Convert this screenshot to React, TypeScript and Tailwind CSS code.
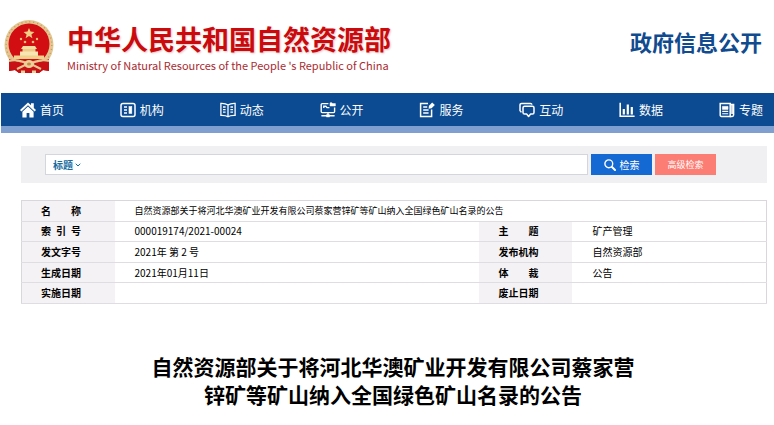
import React from "react";
import { ChevronDown } from "lucide-react";

interface NavItemProps {
  title: string;
  icon: React.ReactNode;
}

const HomeIcon = () => (
  <svg viewBox="0 0 16 16" className="h-4 w-4" fill="currentColor">
    <path d="M8 0.4 0 8l1.4 1.4L8 3.2l6.6 6.2L16 8 13.8 5.9V1.2h-2.800v2z" />
    <path d="M8 4.4 2.4 9.7V15.6h4.200V11h2.800v4.6h4.200V9.7z" />
  </svg>
);

const OrgIcon = () => (
  <svg viewBox="0 0 16 16" className="h-4 w-4" fill="none" stroke="currentColor">
    <rect x="1" y="1.4" width="14" height="13.2" rx="2" strokeWidth="1.5" />
    <path d="M4 5h3M4 8h3M4 11h3" strokeWidth="1.5" />
    <rect x="9" y="4.6" width="2.8" height="6.8" fill="currentColor" strokeWidth="0.6" />
  </svg>
);

const BookIcon = () => (
  <svg viewBox="0 0 16 16" className="h-4 w-4" fill="none" stroke="currentColor" strokeWidth="1.3">
    <path d="M8 3C6 1.6 3.5 1.3 0.9 1.4V13.4C3.5 13.3 6 13.4 8 14.8 10 13.4 12.5 13.3 15.1 13.4V1.4C12.5 1.3 10 1.6 8 3zM8 3V14.8" />
    <path d="M3 5h2.6M3 7.6h2.6M3 10.2h2.6M10.4 5H13M10.4 7.6H13M10.4 10.2H13" />
  </svg>
);

const OpenIcon = () => (
  <svg viewBox="0 0 16 16" className="h-4 w-4" fill="none" stroke="currentColor" strokeWidth="1.4">
    <path d="M8.4 1.6H2.2a1 1 0 0 0-1 1v7a1 1 0 0 0 1 1h11.4a1 1 0 0 0 1-1V5.4" />
    <path d="M10 3V0.8h2l0.6 0.8H15.4V4H10z" fill="currentColor" strokeWidth="0.5" />
    <path d="M3.8 6V4.2h2L7 5.6h2.4M8 10.6v3M1.4 13.8h13.2" />
    <path d="M6.4 12.6h3.2v2.4H6.4z" fill="currentColor" strokeWidth="0.4" />
  </svg>
);

const ServiceIcon = () => (
  <svg viewBox="0 0 16 16" className="h-4 w-4" fill="none" stroke="currentColor" strokeWidth="1.5">
    <path d="M9 1.4H1.6v13.2h11V7.6" />
    <path d="M4.2 5h4M4.2 8h5.4M4.2 11h5.4" strokeWidth="1.3" />
    <path d="M9.6 6.8 10 3.8 13.2 0.4l2.6 2.6-3.2 3.2z" fill="currentColor" stroke="none" />
  </svg>
);

const ChatIcon = () => (
  <svg viewBox="0 0 16 16" className="h-4 w-4" fill="none" stroke="currentColor" strokeWidth="1.5" strokeLinejoin="round">
    <path d="M2.4 10.4 1 8.6V3a1.6 1.6 0 0 1 1.6-1.6h8.800a1.6 1.6 0 0 1 1.6 1.2" />
    <path d="M5.6 4.2h7.800a1.6 1.6 0 0 1 1.6 1.6v4.6a1.6 1.6 0 0 1-1.6 1.6h-1.800l-2 2.4-2-2.4h-2A1.6 1.6 0 0 1 4 10.4V5.800a1.6 1.6 0 0 1 1.6-1.6z" />
  </svg>
);

const ChartIcon = () => (
  <svg viewBox="0 0 16 16" className="h-4 w-4" fill="none" stroke="currentColor">
    <path d="M1.2 0.8V14.2H15.6" strokeWidth="1.6" />
    <path d="M4.8 7v5.6M8.8 2.4v10.2M12.8 5v7.6" strokeWidth="2.2" />
  </svg>
);

const NewsIcon = () => (
  <svg viewBox="0 0 16 16" className="h-4 w-4" fill="none" stroke="currentColor" strokeWidth="1.5">
    <path d="M1.2 1.4h10v13H2.4a1.2 1.2 0 0 1-1.2-1.2z" />
    <path d="M11.2 2.4h3.4v10.6a1.4 1.4 0 0 1-1.4 1.4h-2.4M13 3v9" />
    <path d="M3.4 4.4H9v3H3.4z" fill="currentColor" strokeWidth="0.6" />
    <path d="M3.2 9.4h6M3.2 11.8h6" strokeWidth="1.1" />
  </svg>
);

const SearchIcon = () => (
  <svg viewBox="0 0 12 12" className="h-3 w-3" fill="none" stroke="currentColor">
    <circle cx="4.8" cy="4.8" r="3.9" strokeWidth="1.4" />
    <path d="m8 8 3 3" strokeWidth="2" strokeLinecap="round" />
  </svg>
);

const Emblem = () => (
  <svg viewBox="0 0 52 56" className="h-14 w-[52px] shrink-0" aria-hidden="true">
    <path d="M7 38 6 52l6-1 4 3h20l4-3 6 1-1-14z" fill="#b80f12" />
    <ellipse cx="26" cy="26" rx="24.5" ry="25" fill="#e3c691" />
    <ellipse cx="26" cy="26" rx="22.8" ry="23.2" fill="none" stroke="#c49a5a" strokeWidth="1.4" strokeDasharray="1 3" />
    <ellipse cx="26" cy="25" rx="20.5" ry="20.5" fill="#d20e12" />
    <path d="m26 9 1.5 3.6 3.9.3-3 2.5 1 3.8-3.4-2.1-3.4 2.1 1-3.8-3-2.5 3.9-.3z" fill="#f2cf83" />
    <g fill="#eebf70">
      <circle cx="18" cy="20" r="1.2" />
      <circle cx="22" cy="23" r="1.3" />
      <circle cx="30" cy="23" r="1.3" />
      <circle cx="34" cy="20" r="1.2" />
    </g>
    <path d="M20 27h12l2 3H18z" fill="#f5dda0" />
    <path d="M19.5 30h13v3h-13z" fill="#efc987" />
    <path d="M17 32.500h18V37H17z" fill="#f8e5b4" />
    <path d="M11 36.500h30V40H11z" fill="#f0d28f" />
    <path d="M6 40c6 2 12 4 20 4s14-2 20-4v12l-6-1-4 3H16l-4-3-6 1z" fill="#c81114" />
    <path d="M6 42c7-2 12 0 20 3 8-3 13-5 20-3M14 50l8-4h8l8 4" fill="none" stroke="#e6c78f" strokeWidth="2.2" />
    <ellipse cx="26" cy="45" rx="5" ry="4" fill="#ecd09a" />
    <ellipse cx="26" cy="45" rx="2" ry="1.5" fill="#c88a45" />
    <path d="M18 54v-2.500h4V54M29 54v-2.500h4V54" fill="#ecd09a" />
  </svg>
);

const navItems: NavItemProps[] = [
  { title: "首页", icon: <HomeIcon /> },
  { title: "机构", icon: <OrgIcon /> },
  { title: "动态", icon: <BookIcon /> },
  { title: "公开", icon: <OpenIcon /> },
  { title: "服务", icon: <ServiceIcon /> },
  { title: "互动", icon: <ChatIcon /> },
  { title: "数据", icon: <ChartIcon /> },
  { title: "专题", icon: <NewsIcon /> },
];

const rows = [
  { label: ["索", "引", "号"], value: "000019174/2021-00024", label2: ["主", "题"], value2: "矿产管理" },
  { label: ["发文字号"], value: "2021年 第 2 号", label2: ["发布机构"], value2: "自然资源部" },
  { label: ["生成日期"], value: "2021年01月11日", label2: ["体", "裁"], value2: "公告" },
  { label: ["实施日期"], value: "", label2: ["废止日期"], value2: "" },
];

const NavItem: React.FC<NavItemProps> = ({ title, icon }) => {
  return (
    <a href="#" className="flex items-center gap-1 text-[12px] leading-4 text-white">
      {icon}
      {title}
    </a>
  );
};

const LabelCell: React.FC<{ parts: string[] }> = ({ parts }) => {
  return (
    <th scope="row" className="bg-[#f4f2f4] p-0 pl-[19px] text-left font-bold">
      <span className="flex w-10 justify-between whitespace-nowrap">
        {parts.map((part) => (
          <span key={part}>{part}</span>
        ))}
      </span>
    </th>
  );
};

const App: React.FC = () => {
  return (
    <div className="w-full bg-white pb-4 font-['Noto_Sans_CJK_SC',sans-serif] text-black">
      <header className="flex h-[93px] items-center justify-between pr-3 pl-[3px]">
        <div className="flex items-center gap-3">
          <Emblem />
          <div className="pt-1">
            <p className="text-[27px] leading-8 font-bold text-[#cb0a0e] [text-shadow:1px_1px_2px_#e8c4c4]">
              中华人民共和国自然资源部
            </p>
            <p className="text-[11px] leading-5 whitespace-nowrap text-[#a92a30]">
              Ministry of Natural Resources of the People 's Republic of China
            </p>
          </div>
        </div>
        <p className="pb-3 text-[22px] leading-7 font-bold text-[#114b8f]">政府信息公开</p>
      </header>

      <nav className="ml-px flex h-10 items-center justify-between border-b-[7px] border-[#7e9fd0] bg-[#0c4b91] pr-[11px] pl-[19px]">
        {navItems.map((item) => (
          <NavItem key={item.title} {...item} />
        ))}
      </nav>

      <main className="pr-[7px] pl-[21px]">
        <form
          className="mt-[13px] flex h-[37px] items-center gap-[3px] bg-[#f0eff1] pr-[51px] pl-6 text-[10px]"
          onSubmit={(e) => e.preventDefault()}
        >
          <div className="relative flex h-[21px] flex-1 items-center border border-[#d5d5de] bg-white pl-[7px]">
            <select
              aria-label="检索字段"
              className="h-full w-8 appearance-none bg-transparent font-bold text-[#166c9e] outline-none"
            >
              <option>标题</option>
            </select>
            <ChevronDown className="pointer-events-none absolute left-7 h-2 w-2 text-[#166c9e]" strokeWidth={3} />
            <input aria-label="检索内容" type="text" className="h-full min-w-0 flex-1 px-2 outline-none" />
          </div>
          <button type="submit" className="flex h-[21px] w-[61px] items-center justify-center gap-1 bg-[#1469d3] text-white">
            <SearchIcon />
            检索
          </button>
          <button type="button" className="h-[21px] w-[61px] bg-[#fb7d74] text-[9px] text-white">
            高级检索
          </button>
        </form>

        <table className="mt-[17px] h-[104px] w-full table-fixed border-collapse border border-[#d9d7dc] text-[10px] leading-4">
          <colgroup>
            <col className="w-[93px]" />
            <col />
            <col className="w-[93px]" />
            <col className="w-[194px]" />
          </colgroup>
          <tbody>
            <tr className="border-b border-[#dfdde1]">
              <LabelCell parts={["名", "称"]} />
              <td colSpan={3} className="p-0 pl-5 text-[9px]">
                自然资源部关于将河北华澳矿业开发有限公司蔡家营锌矿等矿山纳入全国绿色矿山名录的公告
              </td>
            </tr>
            {rows.map((row) => (
              <tr key={row.label[0]} className="border-b border-[#dfdde1]">
                <LabelCell parts={row.label} />
                <td className="p-0 pl-5">{row.value}</td>
                <LabelCell parts={row.label2} />
                <td className="p-0 pl-5">{row.value2}</td>
              </tr>
            ))}
          </tbody>
        </table>
      </main>

      <h1 className="mt-12 pl-3 text-center text-[21px] leading-7 font-bold">
        自然资源部关于将河北华澳矿业开发有限公司蔡家营
        <br />
        锌矿等矿山纳入全国绿色矿山名录的公告
      </h1>
    </div>
  );
};

export default App;
